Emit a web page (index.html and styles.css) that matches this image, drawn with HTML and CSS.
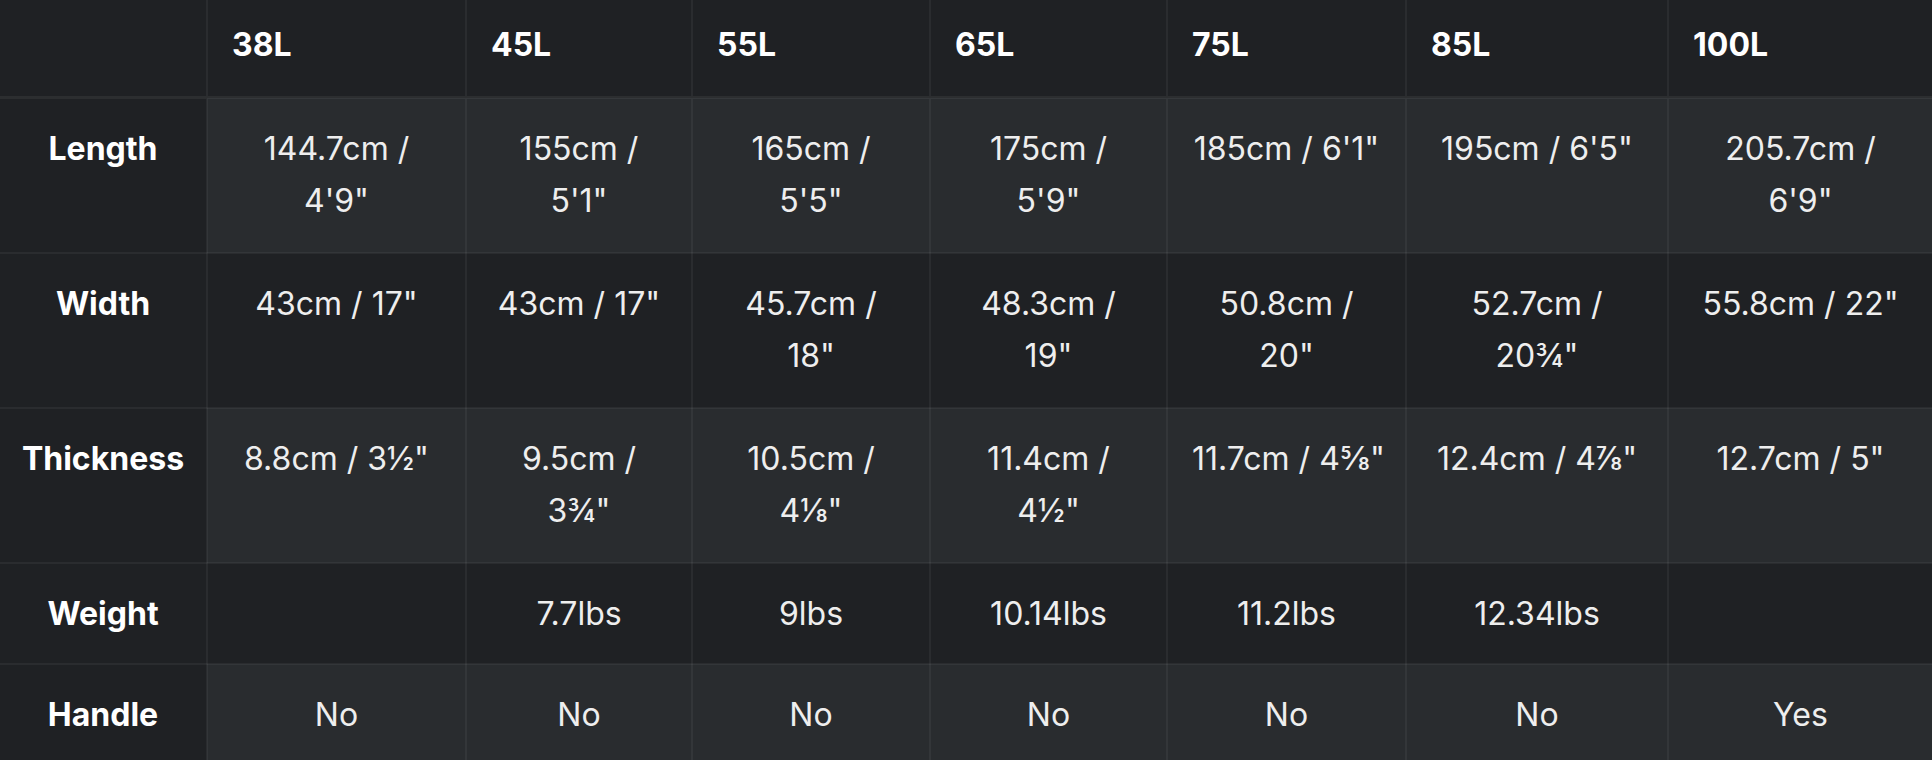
FILE: index.html
```html
<!DOCTYPE html>
<html lang="en">
<head>
<meta charset="utf-8">
<title>Size chart</title>
<link rel="stylesheet" href="styles.css">
</head>
<body>
<table class="spec">
  <colgroup>
    <col class="col-label">
    <col class="col-38">
    <col class="col-45">
    <col class="col-55">
    <col class="col-65">
    <col class="col-75">
    <col class="col-85">
    <col class="col-100">
  </colgroup>
  <thead>
    <tr>
      <th class="corner"></th>
      <th>38L</th>
      <th>45L</th>
      <th>55L</th>
      <th>65L</th>
      <th>75L</th>
      <th>85L</th>
      <th>100L</th>
    </tr>
  </thead>
  <tbody>
    <tr>
      <th>Length</th>
      <td>144.7cm /<br>4'9"</td>
      <td>155cm /<br>5'1"</td>
      <td>165cm /<br>5'5"</td>
      <td>175cm /<br>5'9"</td>
      <td>185cm / 6'1"</td>
      <td>195cm / 6'5"</td>
      <td>205.7cm /<br>6'9"</td>
    </tr>
    <tr>
      <th>Width</th>
      <td>43cm / 17"</td>
      <td>43cm / 17"</td>
      <td>45.7cm /<br>18"</td>
      <td>48.3cm /<br>19"</td>
      <td>50.8cm /<br>20"</td>
      <td>52.7cm /<br>20¾"</td>
      <td>55.8cm / 22"</td>
    </tr>
    <tr>
      <th>Thickness</th>
      <td>8.8cm / 3½"</td>
      <td>9.5cm /<br>3¾"</td>
      <td>10.5cm /<br>4⅛"</td>
      <td>11.4cm /<br>4½"</td>
      <td>11.7cm / 4⅝"</td>
      <td>12.4cm / 4⅞"</td>
      <td>12.7cm / 5"</td>
    </tr>
    <tr class="single">
      <th>Weight</th>
      <td></td>
      <td>7.7lbs</td>
      <td>9lbs</td>
      <td>10.14lbs</td>
      <td>11.2lbs</td>
      <td>12.34lbs</td>
      <td></td>
    </tr>
    <tr class="single">
      <th>Handle</th>
      <td>No</td>
      <td>No</td>
      <td>No</td>
      <td>No</td>
      <td>No</td>
      <td>No</td>
      <td>Yes</td>
    </tr>
  </tbody>
</table>
</body>
</html>
```

FILE: styles.css
```css
html, body {
  margin: 0;
  padding: 0;
  background: #1f2124;
}

body {
  font-family: Inter, "Liberation Sans", sans-serif;
  font-size: 32px;
  line-height: 52px;
  color: #eeeeee;
}

.spec {
  width: 1932px;
  table-layout: fixed;
  border-collapse: collapse;
  border-style: hidden;
}

.col-label { width: 207px; }
.col-38 { width: 259px; }
.col-45 { width: 226px; }
.col-55 { width: 238px; }
.col-65 { width: 237px; }
.col-75 { width: 239px; }
.col-85 { width: 262px; }
.col-100 { width: 264px; }

.spec th,
.spec td {
  border: 2px solid rgba(255, 255, 255, 0.05);
  padding: 24px 24px 25px;
  vertical-align: top;
  white-space: nowrap;
}

.spec thead th {
  background: #1f2124;
  color: #ffffff;
  font-weight: 700;
  text-align: left;
  padding: 19px 24px 25px;
  border-bottom: 3px solid rgba(255, 255, 255, 0.06);
}

.spec tbody th {
  background: #1f2124;
  color: #ffffff;
  font-weight: 700;
  text-align: center;
  padding-left: 8px;
  padding-right: 8px;
}

.spec tbody td {
  background: #1f2124;
  text-align: center;
  font-weight: 400;
}

.spec tbody tr:nth-child(odd) td {
  background: #292c2f;
}

.spec tbody tr.single th,
.spec tbody tr.single td {
  padding-bottom: 23px;
}
```
